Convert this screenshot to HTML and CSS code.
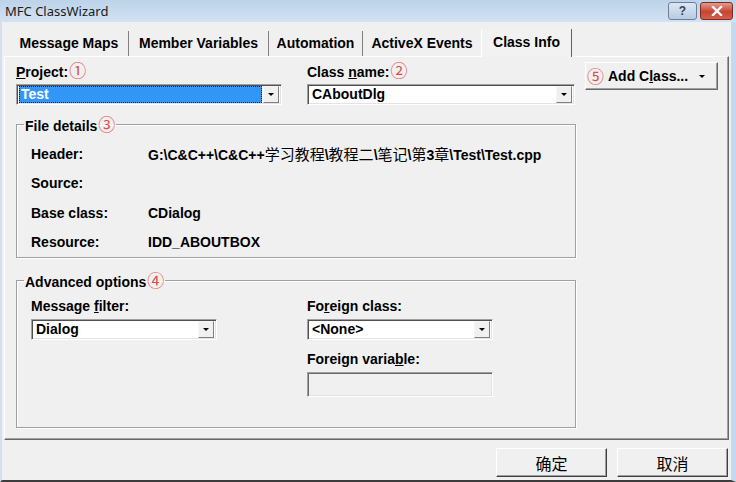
FILE: index.html
```html
<!DOCTYPE html>
<html lang="zh-CN">
<head>
    <meta charset="UTF-8">
    <meta name="viewport" content="width=device-width, initial-scale=1.0">
    <title>MFC ClassWizard</title>
    <link rel="stylesheet" href="styles.css">
</head>
<body>
    <div class="window">
        <div class="titlebar">
            <span class="title">MFC ClassWizard</span>
            <div class="caption-btns">
                <div class="cap-btn help">?</div>
                <div class="cap-btn close">
                    <svg width="12" height="10" viewBox="0 0 12 10">
                        <path d="M2 1 L10 9 M10 1 L2 9" stroke="#fff" stroke-width="2.4" stroke-linecap="square"/>
                    </svg>
                </div>
            </div>
        </div>

        <div class="frame">
            <ul class="tabs">
                <li class="tab">Message Maps</li>
                <li class="tab">Member Variables</li>
                <li class="tab">Automation</li>
                <li class="tab">ActiveX Events</li>
                <li class="tab active">Class Info</li>
            </ul>

            <div class="page">
                <div class="top-row">
                    <div class="field project">
                        <div class="label"><u>P</u>roject:<span class="num">①</span></div>
                        <div class="combo selected">
                            <span class="combo-text">Test</span>
                            <span class="drop"></span>
                        </div>
                    </div>
                    <div class="field classname">
                        <div class="label">Class <u>n</u>ame:<span class="num">②</span></div>
                        <div class="combo">
                            <span class="combo-text">CAboutDlg</span>
                            <span class="drop"></span>
                        </div>
                    </div>
                    <div class="btn add-class">
                        <span class="num">⑤</span>
                        <span class="btn-text">Add C<u>l</u>ass...</span>
                        <span class="arrow"></span>
                    </div>
                </div>

                <fieldset class="group details">
                    <legend>File details<span class="num">③</span></legend>
                    <div class="details-grid">
                        <span>Header:</span>
                        <span>G:\C&amp;C++\C&amp;C++<span class="cjk">学习教程</span>\<span class="cjk">教程二</span>\<span class="cjk">笔记</span>\<span class="cjk">第</span>3<span class="cjk">章</span>\Test\Test.cpp</span>
                        <span>Source:</span>
                        <span></span>
                        <span>Base class:</span>
                        <span>CDialog</span>
                        <span>Resource:</span>
                        <span>IDD_ABOUTBOX</span>
                    </div>
                </fieldset>

                <fieldset class="group advanced">
                    <legend>Advanced options<span class="num">④</span></legend>
                    <div class="adv-cols">
                        <div class="adv-col">
                            <div class="label">Message <u>f</u>ilter:</div>
                            <div class="combo">
                                <span class="combo-text">Dialog</span>
                                <span class="drop"></span>
                            </div>
                        </div>
                        <div class="adv-col">
                            <div class="label">Fo<u>r</u>eign class:</div>
                            <div class="combo">
                                <span class="combo-text">&lt;None&gt;</span>
                                <span class="drop"></span>
                            </div>
                            <div class="label second">Foreign varia<u>b</u>le:</div>
                            <div class="edit disabled"></div>
                        </div>
                    </div>
                </fieldset>
            </div>

            <div class="footer">
                <div class="btn dlg">确定</div>
                <div class="btn dlg">取消</div>
            </div>
        </div>
    </div>
</body>
</html>
```

FILE: styles.css
```css
body {
    margin: 0;
    padding: 0;
    background-color: #f0f0f0;
    font-family: "Liberation Sans", Arial, sans-serif;
    font-size: 14px;
    font-weight: bold;
    color: #000;
}

.window {
    width: 736px;
    height: 482px;
    display: flex;
    flex-direction: column;
    overflow: hidden;
}

/* title bar */
.titlebar {
    height: 22px;
    flex: none;
    display: flex;
    align-items: flex-start;
    justify-content: space-between;
    background: linear-gradient(to bottom, #bcd3ea, #d3e2f2);
}
.title {
    font-family: "Noto Sans", sans-serif;
    font-weight: normal;
    font-size: 13px;
    line-height: 22px;
    padding-left: 5px;
    color: #1a1a1a;
}
.caption-btns {
    display: flex;
    gap: 3px;
    padding: 2px 3px 0 0;
}
.cap-btn {
    height: 16px;
    border: 1px solid #6d7f96;
    border-radius: 3px;
    display: flex;
    align-items: center;
    justify-content: center;
}
.cap-btn.help {
    width: 27px;
    background: linear-gradient(to bottom, #dce7f4, #b9cbe2);
    color: #33475f;
    font-family: "Liberation Sans", sans-serif;
    font-size: 12px;
}
.cap-btn.close {
    width: 31px;
    border-color: #7c2b22;
    background: linear-gradient(to bottom, #e49a8f, #c9432f 55%, #d5604c);
}

/* window body */
.frame {
    flex: 1;
    display: flex;
    flex-direction: column;
    border-left: 2px solid #d3e0ee;
    border-right: 5px solid #c5d8ed;
    border-bottom: 2px solid #3c3c3c;
    background-color: #f0f0f0;
}

/* tabs */
.tabs {
    list-style: none;
    margin: 7px 0 0 0;
    padding: 0 0 0 8px;
    display: flex;
    height: 27px;
    position: relative;
    z-index: 1;
}
.tab {
    margin-top: 2px;
    height: 25px;
    line-height: 25px;
    text-align: center;
    border-right: 1px solid #808080;
    box-sizing: border-box;
}
.tab:nth-child(1) { width: 119px; }
.tab:nth-child(2) { width: 140px; }
.tab:nth-child(3) { width: 94px; }
.tab:nth-child(4) { width: 118px; border-right: none; }
.tab.active {
    width: 91px;
    margin-top: 0;
    height: 28px;
    line-height: 26px;
    background-color: #f2f2f2;
    border-left: 1px solid #fff;
    border-right: 1px solid #606060;
}

.page {
    margin: 0 2px;
    height: 384px;
    box-sizing: border-box;
    padding: 5px 10px 0 11px;
    border-top: 1px solid #fff;
    border-left: 1px solid #fff;
    border-right: 1px solid #696969;
    border-bottom: 1px solid #696969;
    box-shadow: inset -1px -1px 0 #a0a0a0;
}

/* top row */
.top-row {
    display: flex;
    align-items: flex-start;
}
.field.project { width: 266px; }
.field.classname { width: 268px; margin-left: 25px; }

.label {
    height: 22px;
    line-height: 18px;
    white-space: nowrap;
}
.label.second { margin-top: 10px; }

.num {
    font-family: "Noto Sans CJK SC", sans-serif;
    font-weight: normal;
    font-size: 17px;
    line-height: 16px;
    color: #e24a4a;
    margin-left: 1px;
}

.combo {
    height: 21px;
    box-sizing: border-box;
    background-color: #fff;
    border: 1px solid;
    border-color: #a0a0a0 #fff #fff #a0a0a0;
    box-shadow: inset 1px 1px 0 #505050, inset -1px -1px 0 #e3e3e3;
    display: flex;
    align-items: center;
    padding: 1px 2px 1px 2px;
}
.combo-text {
    flex: 1;
    height: 17px;
    line-height: 17px;
    padding-left: 2px;
    box-sizing: border-box;
}
.combo.selected .combo-text {
    background-color: #3296f6;
    color: #fff;
    outline: 1px dotted #1b1b1b;
    outline-offset: -1px;
    margin-right: 1px;
}
.drop {
    width: 16px;
    height: 17px;
    box-sizing: border-box;
    background-color: #f0f0f0;
    border: 1px solid;
    border-color: #f6f6f6 #808080 #808080 #f6f6f6;
    display: flex;
    align-items: center;
    justify-content: center;
}
.drop::after,
.arrow::after {
    content: "";
    border-left: 3px solid transparent;
    border-right: 3px solid transparent;
    border-top: 3px solid #000;
}

/* buttons */
.btn {
    box-sizing: border-box;
    background-color: #f0f0f0;
    border: 1px solid;
    border-color: #fff #696969 #696969 #fff;
    box-shadow: inset -1px -1px 0 #a0a0a0;
    display: flex;
    align-items: center;
}
.add-class {
    margin-left: 10px;
    width: 133px;
    height: 28px;
    padding: 0 12px 0 1px;
}
.add-class .num { margin-left: 0; margin-right: 4px; }
.add-class .btn-text { flex: 1; }
.arrow { display: flex; }

/* group boxes */
.group {
    margin: 0;
    padding: 0 0 0 14px;
    width: 560px;
    box-sizing: border-box;
    border: 1px solid #a0a0a0;
    box-shadow: 1px 1px 0 #fff, inset 1px 1px 0 #fff;
}
.group legend {
    margin-left: -7px;
    padding: 0 1px;
    height: 16px;
    line-height: 16px;
}
.details {
    margin-top: 11px;
}
.details-grid {
    display: grid;
    grid-template-columns: 117px auto;
    grid-auto-rows: 29.5px;
    align-items: center;
    padding-top: 7px;
}
.cjk {
    font-family: "Noto Sans CJK SC", sans-serif;
    font-weight: normal;
    font-size: 15px;
}

.advanced {
    margin-top: 14px;
    height: 156px;
}
.adv-cols {
    display: flex;
    gap: 90px;
    padding-top: 9px;
}
.adv-col { width: 186px; }
.edit {
    height: 25px;
    box-sizing: border-box;
    border: 1px solid;
    border-color: #a0a0a0 #fff #fff #a0a0a0;
    box-shadow: inset 1px 1px 0 #696969, inset -1px -1px 0 #e3e3e3;
}
.edit.disabled { background-color: #f0f0f0; }

/* dialog buttons */
.footer {
    display: flex;
    justify-content: flex-end;
    gap: 10px;
    padding: 8px 3px 0 0;
}
.dlg {
    width: 111px;
    height: 29px;
    justify-content: center;
    font-family: "Noto Sans CJK SC", sans-serif;
    font-weight: normal;
    font-size: 16px;
    border-color: #fff #404040 #404040 #fff;
}
```
